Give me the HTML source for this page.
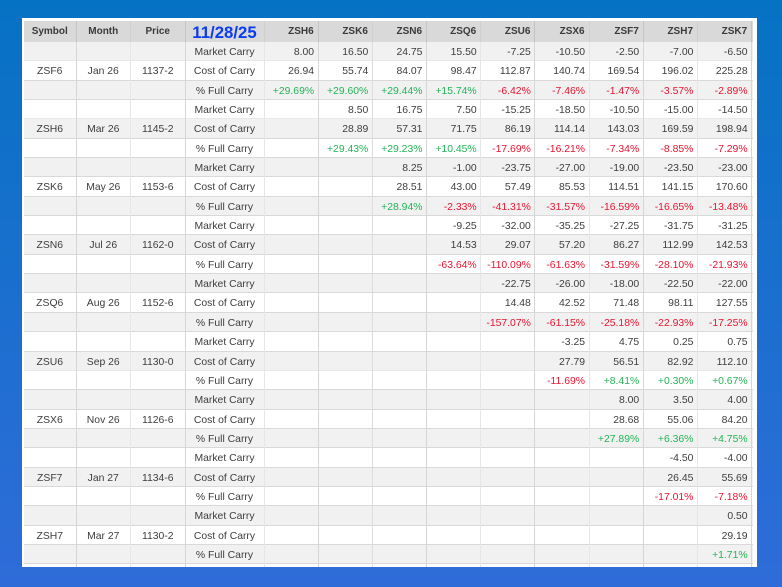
<!DOCTYPE html>
<html><head><meta charset="utf-8">
<style>
html,body{margin:0;padding:0}
body{width:782px;height:587px;overflow:hidden;position:relative;background:linear-gradient(180deg,#0672c4 0%,#2f6cd9 100%);font-family:"Liberation Sans",sans-serif;font-size:10.4px;color:#3d3d3d}
#p{position:absolute;left:22px;top:18px;width:735px;height:549px;background:#fff;overflow:hidden}
#t{position:absolute;left:2px;top:3px;width:729px}
.r{display:grid;grid-template-columns:52.5px 54.5px 54.5px 79px repeat(9,54.2px);height:19.35px;box-sizing:border-box;border-bottom:1px solid #d9d9d9}
.r.g{background:#f1f1f1}
.r.f{border-bottom-color:#e8e8e8}
.r.h{height:21px;background:#d9d9d9;font-weight:bold;color:#3a3a3a;border-bottom:0}
.r span{display:block;box-sizing:border-box;border-right:1px solid #d6d6d6;line-height:21px;text-align:right;padding-right:3.6px;white-space:nowrap;overflow:visible}
.r span:nth-child(even){border-right-color:#e6e6e6}
.r span:nth-child(6){border-right-color:#dcdcdc}
.r.h span{line-height:22.5px;border-right-color:#c4c4c4;padding-right:4px;font-size:10px}
.r.h span:nth-child(even){border-right-color:#d0d0d0}
.r span:nth-child(-n+4){text-align:center;padding:0}
.r.h span:nth-child(4){color:#0b3cf0;font-size:16.8px;font-weight:bold;line-height:23px}
.u{color:#22b455}.d{color:#e8132f}
</style></head><body>
<div id="p"><div id="t">
<div class="r h"><span>Symbol</span><span>Month</span><span>Price</span><span>11/28/25</span><span>ZSH6</span><span>ZSK6</span><span>ZSN6</span><span>ZSQ6</span><span>ZSU6</span><span>ZSX6</span><span>ZSF7</span><span>ZSH7</span><span>ZSK7</span></div>
<div class="r g f"><span></span><span></span><span></span><span>Market Carry</span><span>8.00</span><span>16.50</span><span>24.75</span><span>15.50</span><span>-7.25</span><span>-10.50</span><span>-2.50</span><span>-7.00</span><span>-6.50</span></div>
<div class="r"><span>ZSF6</span><span>Jan 26</span><span>1137-2</span><span>Cost of Carry</span><span>26.94</span><span>55.74</span><span>84.07</span><span>98.47</span><span>112.87</span><span>140.74</span><span>169.54</span><span>196.02</span><span>225.28</span></div>
<div class="r g"><span></span><span></span><span></span><span>% Full Carry</span><span class="u">+29.69%</span><span class="u">+29.60%</span><span class="u">+29.44%</span><span class="u">+15.74%</span><span class="d">-6.42%</span><span class="d">-7.46%</span><span class="d">-1.47%</span><span class="d">-3.57%</span><span class="d">-2.89%</span></div>
<div class="r f"><span></span><span></span><span></span><span>Market Carry</span><span></span><span>8.50</span><span>16.75</span><span>7.50</span><span>-15.25</span><span>-18.50</span><span>-10.50</span><span>-15.00</span><span>-14.50</span></div>
<div class="r g"><span>ZSH6</span><span>Mar 26</span><span>1145-2</span><span>Cost of Carry</span><span></span><span>28.89</span><span>57.31</span><span>71.75</span><span>86.19</span><span>114.14</span><span>143.03</span><span>169.59</span><span>198.94</span></div>
<div class="r"><span></span><span></span><span></span><span>% Full Carry</span><span></span><span class="u">+29.43%</span><span class="u">+29.23%</span><span class="u">+10.45%</span><span class="d">-17.69%</span><span class="d">-16.21%</span><span class="d">-7.34%</span><span class="d">-8.85%</span><span class="d">-7.29%</span></div>
<div class="r g"><span></span><span></span><span></span><span>Market Carry</span><span></span><span></span><span>8.25</span><span>-1.00</span><span>-23.75</span><span>-27.00</span><span>-19.00</span><span>-23.50</span><span>-23.00</span></div>
<div class="r"><span>ZSK6</span><span>May 26</span><span>1153-6</span><span>Cost of Carry</span><span></span><span></span><span>28.51</span><span>43.00</span><span>57.49</span><span>85.53</span><span>114.51</span><span>141.15</span><span>170.60</span></div>
<div class="r g"><span></span><span></span><span></span><span>% Full Carry</span><span></span><span></span><span class="u">+28.94%</span><span class="d">-2.33%</span><span class="d">-41.31%</span><span class="d">-31.57%</span><span class="d">-16.59%</span><span class="d">-16.65%</span><span class="d">-13.48%</span></div>
<div class="r"><span></span><span></span><span></span><span>Market Carry</span><span></span><span></span><span></span><span>-9.25</span><span>-32.00</span><span>-35.25</span><span>-27.25</span><span>-31.75</span><span>-31.25</span></div>
<div class="r g"><span>ZSN6</span><span>Jul 26</span><span>1162-0</span><span>Cost of Carry</span><span></span><span></span><span></span><span>14.53</span><span>29.07</span><span>57.20</span><span>86.27</span><span>112.99</span><span>142.53</span></div>
<div class="r"><span></span><span></span><span></span><span>% Full Carry</span><span></span><span></span><span></span><span class="d">-63.64%</span><span class="d">-110.09%</span><span class="d">-61.63%</span><span class="d">-31.59%</span><span class="d">-28.10%</span><span class="d">-21.93%</span></div>
<div class="r g"><span></span><span></span><span></span><span>Market Carry</span><span></span><span></span><span></span><span></span><span>-22.75</span><span>-26.00</span><span>-18.00</span><span>-22.50</span><span>-22.00</span></div>
<div class="r"><span>ZSQ6</span><span>Aug 26</span><span>1152-6</span><span>Cost of Carry</span><span></span><span></span><span></span><span></span><span>14.48</span><span>42.52</span><span>71.48</span><span>98.11</span><span>127.55</span></div>
<div class="r g"><span></span><span></span><span></span><span>% Full Carry</span><span></span><span></span><span></span><span></span><span class="d">-157.07%</span><span class="d">-61.15%</span><span class="d">-25.18%</span><span class="d">-22.93%</span><span class="d">-17.25%</span></div>
<div class="r"><span></span><span></span><span></span><span>Market Carry</span><span></span><span></span><span></span><span></span><span></span><span>-3.25</span><span>4.75</span><span>0.25</span><span>0.75</span></div>
<div class="r g f"><span>ZSU6</span><span>Sep 26</span><span>1130-0</span><span>Cost of Carry</span><span></span><span></span><span></span><span></span><span></span><span>27.79</span><span>56.51</span><span>82.92</span><span>112.10</span></div>
<div class="r"><span></span><span></span><span></span><span>% Full Carry</span><span></span><span></span><span></span><span></span><span></span><span class="d">-11.69%</span><span class="u">+8.41%</span><span class="u">+0.30%</span><span class="u">+0.67%</span></div>
<div class="r g"><span></span><span></span><span></span><span>Market Carry</span><span></span><span></span><span></span><span></span><span></span><span></span><span>8.00</span><span>3.50</span><span>4.00</span></div>
<div class="r"><span>ZSX6</span><span>Nov 26</span><span>1126-6</span><span>Cost of Carry</span><span></span><span></span><span></span><span></span><span></span><span></span><span>28.68</span><span>55.06</span><span>84.20</span></div>
<div class="r g"><span></span><span></span><span></span><span>% Full Carry</span><span></span><span></span><span></span><span></span><span></span><span></span><span class="u">+27.89%</span><span class="u">+6.36%</span><span class="u">+4.75%</span></div>
<div class="r"><span></span><span></span><span></span><span>Market Carry</span><span></span><span></span><span></span><span></span><span></span><span></span><span></span><span>-4.50</span><span>-4.00</span></div>
<div class="r g"><span>ZSF7</span><span>Jan 27</span><span>1134-6</span><span>Cost of Carry</span><span></span><span></span><span></span><span></span><span></span><span></span><span></span><span>26.45</span><span>55.69</span></div>
<div class="r"><span></span><span></span><span></span><span>% Full Carry</span><span></span><span></span><span></span><span></span><span></span><span></span><span></span><span class="d">-17.01%</span><span class="d">-7.18%</span></div>
<div class="r g"><span></span><span></span><span></span><span>Market Carry</span><span></span><span></span><span></span><span></span><span></span><span></span><span></span><span></span><span>0.50</span></div>
<div class="r"><span>ZSH7</span><span>Mar 27</span><span>1130-2</span><span>Cost of Carry</span><span></span><span></span><span></span><span></span><span></span><span></span><span></span><span></span><span>29.19</span></div>
<div class="r g"><span></span><span></span><span></span><span>% Full Carry</span><span></span><span></span><span></span><span></span><span></span><span></span><span></span><span></span><span class="u">+1.71%</span></div>
<div class="r"><span></span><span></span><span></span><span></span><span></span><span></span><span></span><span></span><span></span><span></span><span></span><span></span><span></span></div>
</div></div>
</body></html>
